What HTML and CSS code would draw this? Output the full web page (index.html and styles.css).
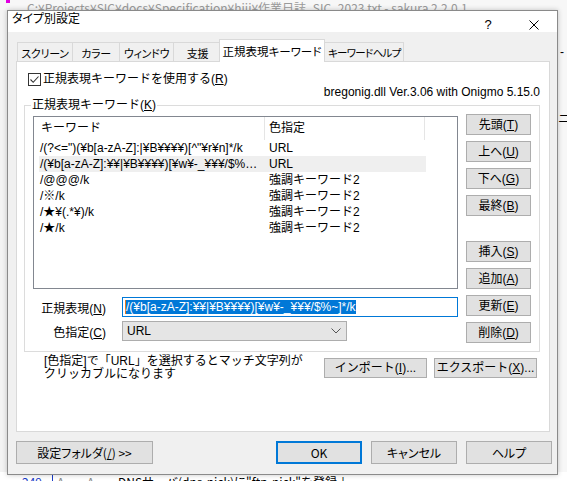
FILE: index.html
```html
<!DOCTYPE html>
<html lang="ja">
<head>
<meta charset="utf-8">
<title>タイプ別設定</title>
<link rel="stylesheet" href="styles.css">
</head>
<body>
<div class="desk">
  <div class="bg-title">
    <span class="bg-icon"></span>
    <span class="bg-title-text">C:¥Projects¥SIC¥docs¥Specification¥hiji¥作業日誌_SIC_2023.txt - sakura 2.2.0.1</span>
  </div>
  <div class="bg-right"><span class="bg-r1">-</span><span class="bg-r2">ニ</span></div>
  <div class="bg-bottom"><span class="ln">249</span><span class="lbar"></span><span class="lt">A</span><span class="lt2">A</span><span class="ltext">DNSサーバ(dns-nick)に"ftp-nick"を登録↓</span></div>

  <div class="dialog">
    <div class="titlebar">
      <span class="title">タイプ別設定</span>
      <span class="tb-btn tb-help">?</span>
      <span class="tb-btn tb-close"><svg width="10" height="10" viewBox="0 0 10 10"><path d="M0.5 0.5 L9.5 9.5 M9.5 0.5 L0.5 9.5" stroke="#000" stroke-width="1" fill="none"/></svg></span>
    </div>
    <div class="dlg-body">
      <div class="tabs">
        <span class="tab w1">スクリーン</span>
        <span class="tab w2">カラー</span>
        <span class="tab w3">ウィンドウ</span>
        <span class="tab w4">支援</span>
        <span class="tab tab-sel w5">正規表現キーワード</span>
        <span class="tab w6">キーワードヘルプ</span>
      </div>
      <div class="panel">
        <div class="chk-row">
          <span class="chk"><svg width="11" height="11" viewBox="0 0 11 11"><path d="M1.5 5.5 L4.2 8.3 L9.5 2.5" stroke="#333" stroke-width="1.1" fill="none"/></svg></span>
          <span>正規表現キーワードを使用する(<u>R</u>)</span>
        </div>
        <div class="ver">bregonig.dll Ver.3.06 with Onigmo 5.15.0</div>
        <div class="group">
          <span class="group-title">正規表現キーワード(<u>K</u>)</span>
          <div class="group-left">
            <div class="list">
              <div class="list-head"><span class="hc1">キーワード</span><span class="hc2">色指定</span></div>
              <div class="row"><span class="c1">/(?&lt;=")(¥b[a-zA-Z]:|¥B¥¥¥¥)[^"¥r¥n]*/k</span><span class="c2">URL</span></div>
              <div class="row row-hl"><span class="c1">/(¥b[a-zA-Z]:¥¥|¥B¥¥¥¥)[¥w¥-_¥¥¥/$%~]*/k</span><span class="c2">URL</span></div>
              <div class="row"><span class="c1">/@@@/k</span><span class="c2">強調キーワード2</span></div>
              <div class="row"><span class="c1">/※/k</span><span class="c2">強調キーワード2</span></div>
              <div class="row"><span class="c1">/★¥(.*¥)/k</span><span class="c2">強調キーワード2</span></div>
              <div class="row"><span class="c1">/★/k</span><span class="c2">強調キーワード2</span></div>
            </div>
            <div class="form-row fr1">
              <span class="flabel">正規表現(<u>N</u>)</span>
              <div class="edit"><span class="sel">/(¥b[a-zA-Z]:¥¥|¥B¥¥¥¥)[¥w¥-_¥¥¥/$%~]*/k</span></div>
            </div>
            <div class="form-row fr2">
              <span class="flabel">色指定(<u>C</u>)</span>
              <div class="combo"><span>URL</span><svg width="10" height="6" viewBox="0 0 10 6"><path d="M0.5 0.5 L5 5 L9.5 0.5" stroke="#555" stroke-width="1" fill="none"/></svg></div>
            </div>
          </div>
          <div class="group-btns">
            <button class="btn">先頭(<u>T</u>)</button>
            <button class="btn">上へ(<u>U</u>)</button>
            <button class="btn">下へ(<u>G</u>)</button>
            <button class="btn">最終(<u>B</u>)</button>
            <button class="btn btn-gap">挿入(<u>S</u>)</button>
            <button class="btn">追加(<u>A</u>)</button>
            <button class="btn">更新(<u>E</u>)</button>
            <button class="btn">削除(<u>D</u>)</button>
          </div>
        </div>
        <div class="foot">
          <div class="note">[色指定]で「URL」を選択するとマッチ文字列が<br>クリッカブルになります</div>
          <button class="btn btn-io">インポート(<u>I</u>)...</button>
          <button class="btn btn-io">エクスポート(<u>X</u>)...</button>
        </div>
      </div>
      <div class="dlg-buttons">
        <button class="btn dbtn dbtn-folder">設定フォルダ(<u>/</u>) &gt;&gt;</button>
        <span class="spacer"></span>
        <button class="btn dbtn dbtn-ok">OK</button>
        <button class="btn dbtn">キャンセル</button>
        <button class="btn dbtn">ヘルプ</button>
      </div>
    </div>
  </div>
</div>
</body>
</html>
```
FILE: styles.css
```css
* { box-sizing: border-box; }
html, body { margin: 0; padding: 0; }
body {
  width: 567px;
  height: 481px;
  overflow: hidden;
  background: #ffffff;
  font-family: "Liberation Sans", "Noto Sans CJK JP", sans-serif;
  font-size: 12px;
  color: #000;
}
.desk {
  position: relative;
  width: 567px;
  height: 481px;
  background: #f3f3f3;
}
.bg-title {
  position: absolute;
  left: 0; top: 0;
  width: 567px; height: 10px;
  background: #f7f7f7;
  overflow: hidden;
}
.bg-icon {
  position: absolute;
  left: 6px; top: 0;
  width: 4px; height: 3px;
  background: #e000e0;
}
.bg-title-text {
  position: absolute;
  left: 27px; top: 0px;
  height: 10px;
  color: #9a9a9a;
  font-size: 12px;
  white-space: nowrap;
  font-family: "Noto Sans CJK JP", sans-serif;
  line-height: 16px;
  overflow: hidden;
}
.bg-right {
  position: absolute;
  left: 557px; top: 10px;
  width: 10px; height: 465px;
  background: #f7f7f7;
  overflow: hidden;
}
.bg-r1 { position: absolute; left: 3px; top: 36px; font-size: 12px; line-height: 12px; }
.bg-r2 { position: absolute; left: 1px; top: 102px; font-size: 12px; line-height: 12px; font-family: "Noto Sans CJK JP", sans-serif; }
.bg-bottom {
  position: absolute;
  left: 0; top: 472px;
  width: 567px; height: 9px;
  background: #fff;
  font-family: "Noto Sans CJK JP", sans-serif;
  font-size: 12px;
  line-height: 14px;
  white-space: nowrap;
  overflow: hidden;
}
.ln { position: absolute; left: 22px; top: 3px; color: #1a3cc8; }
.lbar { position: absolute; left: 52px; top: 0; width: 1px; height: 9px; background: #1a3cc8; }
.lt { position: absolute; left: 57px; top: 3px; color: #888; }
.lt2 { position: absolute; left: 87px; top: 3px; color: #888; }
.ltext { position: absolute; left: 118px; top: 3px; color: #000; }

.dialog {
  position: absolute;
  left: 7px; top: 10px;
  width: 551px; height: 465px;
  border: 1px solid #8a8a8a;
  background: #f0f0f0;
  box-shadow: 0 0 5px rgba(0,0,0,0.22);
  display: flex;
  flex-direction: column;
}
.titlebar {
  height: 21px;
  background: #fff;
  display: flex;
  align-items: flex-start;
  font-family: "Noto Sans CJK JP", sans-serif;
  font-feature-settings: "palt";
}
.title {
  flex: 1;
  padding-left: 4px;
  line-height: 14px;
  padding-top: 0px;
  font-size: 12px;
}
.tb-btn {
  width: 46px;
  height: 21px;
  display: flex;
  align-items: center;
  justify-content: center;
  padding-top: 6px;
}
.tb-help { font-size: 13px; line-height: 13px; font-family: "Liberation Sans", sans-serif; }
.tb-close { padding-top: 7px; }

.dlg-body {
  flex: 1;
  padding: 7px 7px 0 8px;
  display: flex;
  flex-direction: column;
}
.tabs {
  display: flex;
  align-items: flex-end;
  height: 22px;
  padding-left: 1px;
  position: relative;
  z-index: 2;
  font-family: "Noto Sans CJK JP", sans-serif;
  font-feature-settings: "palt";
}
.tab {
  height: 19px;
  border: 1px solid #d9d9d9;
  border-bottom: none;
  margin-right: -1px;
  background: #f0f0f0;
  display: flex;
  align-items: center;
  justify-content: center;
  font-size: 11px;
  line-height: 14px;
  padding-top: 1px;
  white-space: nowrap;
  letter-spacing: -0.3px;
}
.w1 { width: 56px; }
.w2 { width: 48px; }
.w3 { width: 55px; }
.w4 { width: 49px; }
.w5 { width: 106px; margin-left: -2px; margin-right: -2px; }
.w6 { width: 81px; justify-content: flex-start; padding-left: 4px; font-size: 10.5px; letter-spacing: -0.7px; }
.tab-sel {
  height: 23px;
  background: #fff;
  margin-bottom: -1px;
  position: relative;
  z-index: 3;
  padding-bottom: 1px;
  font-size: 11.5px;
  letter-spacing: 0;
}
.panel {
  height: 371px;
  border: 1px solid #d9d9d9;
  background: #fff;
  display: flex;
  flex-direction: column;
}
.chk-row {
  display: flex;
  align-items: center;
  margin: 11px 0 0 11px;
  height: 13px;
  gap: 2px;
  line-height: 13px;
}
.chk {
  width: 13px; height: 13px;
  border: 1px solid #333;
  background: #fff;
  display: flex;
  align-items: center;
  justify-content: center;
}
.ver {
  text-align: right;
  margin-right: 9px;
  line-height: 12px;
  height: 12px;
}
.group {
  position: relative;
  margin: 7px 9px 0 7px;
  border: 1px solid #dcdcdc;
  padding: 8px 8px 8px 8px;
  display: flex;
  gap: 8px;
}
.group-title {
  position: absolute;
  left: 6px; top: -8px;
  background: #fff;
  padding: 0 1px;
  line-height: 14px;
}
.group-left {
  width: 425px;
  margin-top: 2px;
  display: flex;
  flex-direction: column;
}
.list {
  height: 173px;
  border: 1px solid #828790;
  background: #fff;
}
.list-head {
  display: flex;
  height: 23px;
  align-items: center;
}
.hc1 {
  width: 231px;
  padding-left: 7px;
  height: 23px;
  line-height: 23px;
  border-right: 1px solid #e5e5e5;
}
.hc2 {
  width: 160px;
  padding-left: 4px;
  height: 23px;
  line-height: 23px;
  border-right: 1px solid #e5e5e5;
}
.row {
  display: flex;
  margin-left: 5px;
  width: 387px;
  height: 16px;
  line-height: 16px;
  white-space: nowrap;
}
.row-hl { background: #efefef; }
.c1 {
  width: 226px;
  padding-left: 1px;
  padding-right: 4px;
  overflow: hidden;
  text-overflow: ellipsis;
}
.c2 {
  width: 161px;
  padding-left: 4px;
}
.form-row {
  display: flex;
  align-items: center;
  height: 20px;
}
.fr1 { margin-top: 8px; }
.fr2 { margin-top: 4px; }
.flabel {
  width: 89px;
  padding-right: 16px;
  text-align: right;
  white-space: nowrap;
}
.edit {
  flex: 1;
  height: 20px;
  border: 1px solid #0078d7;
  background: #fff;
  padding: 2px 0 0 2px;
  white-space: nowrap;
  overflow: hidden;
}
.sel {
  display: inline-block;
  background: #0078d7;
  color: #fff;
  line-height: 14px;
  height: 14px;
  border-left: 1px solid #e8791f;
}
.combo {
  width: 225px;
  height: 20px;
  border: 1px solid #adadad;
  background: #e5e5e5;
  display: flex;
  align-items: center;
  justify-content: space-between;
  padding: 0 5px 0 4px;
}
.group-btns {
  width: 65px;
  display: flex;
  flex-direction: column;
  gap: 6px;
}
.btn {
  font-family: "Liberation Sans", "Noto Sans CJK JP", sans-serif;
  font-size: 12px;
  color: #000;
  background: #e1e1e1;
  border: 1px solid #adadad;
  border-radius: 0;
  padding: 0;
  margin: 0;
  height: 21px;
  line-height: 14px;
  white-space: nowrap;
}
.btn-gap { margin-top: 19px; }
.foot {
  display: flex;
  margin: 0 12px 0 27px;
}
.note {
  flex: 1;
  margin-top: 3px;
  line-height: 13px;
}
.btn-io {
  width: 103px;
  height: 20px;
  margin-top: 6px;
  margin-left: 7px;
}
.dlg-buttons {
  display: flex;
  margin-top: 9px;
  margin-right: -2px;
  gap: 9px;
}
.spacer { flex: 1; }
.dbtn {
  width: 86px;
  height: 23px;
  font-family: "Noto Sans CJK JP", sans-serif;
  font-feature-settings: "palt";
}
.dbtn-folder { width: 137px; }
.dbtn-ok { border: 2px solid #0078d7; }
```
